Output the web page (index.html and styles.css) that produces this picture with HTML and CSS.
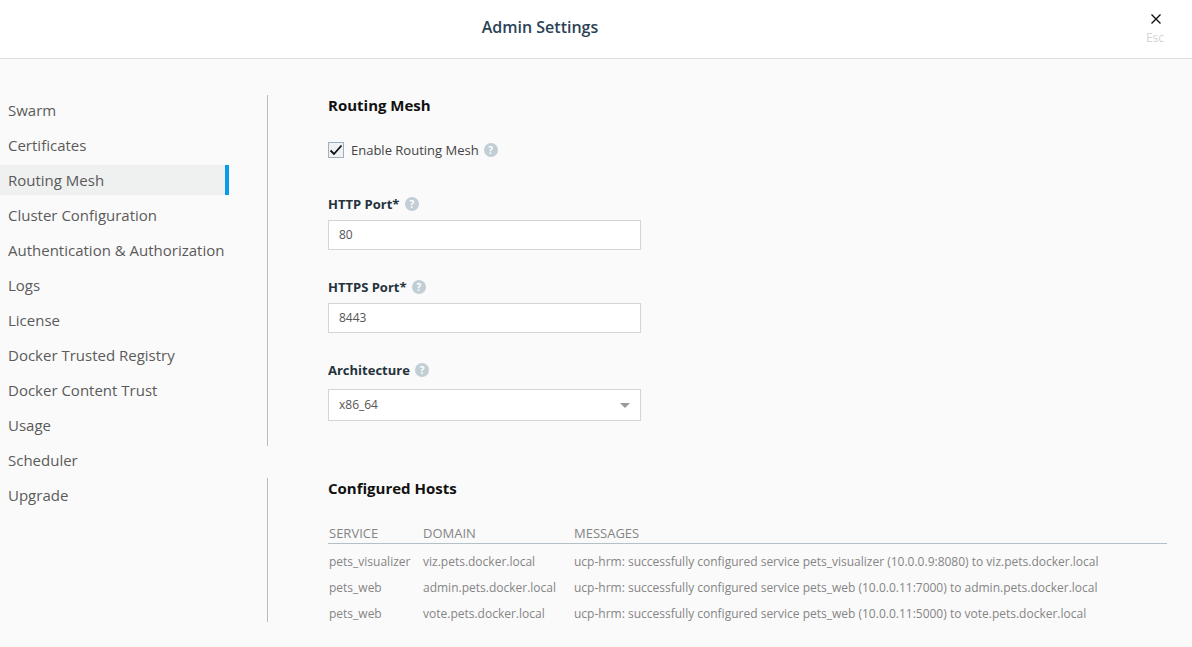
FILE: index.html
```html
<!doctype html>
<html>
<head>
<meta charset="utf-8">
<title>Admin Settings</title>
<link rel="stylesheet" href="styles.css">
</head>
<body>
<div class="header">
	<h1>Admin Settings</h1>
	<a class="close" href="#">
		<svg width="10" height="10" viewBox="0 0 10 10"><path d="M0.5 0.5L9.5 9.5M9.5 0.5L0.5 9.5" stroke="#111" stroke-width="1.4" fill="none"/></svg>
		<span>Esc</span>
	</a>
</div>
<div class="content">
	<ul class="nav">
		<li><a href="#">Swarm</a></li>
		<li><a href="#">Certificates</a></li>
		<li class="active"><a href="#">Routing Mesh</a></li>
		<li><a href="#">Cluster Configuration</a></li>
		<li><a href="#">Authentication &amp; Authorization</a></li>
		<li><a href="#">Logs</a></li>
		<li><a href="#">License</a></li>
		<li><a href="#">Docker Trusted Registry</a></li>
		<li><a href="#">Docker Content Trust</a></li>
		<li><a href="#">Usage</a></li>
		<li><a href="#">Scheduler</a></li>
		<li><a href="#">Upgrade</a></li>
	</ul>
	<div class="main">
		<div class="section mesh">
			<h2>Routing Mesh</h2>
			<label class="check">
				<i class="box"><svg width="14" height="12" viewBox="0 0 14 12"><path d="M1.5 6.5L5 10L12.5 1.5" stroke="#111" stroke-width="1.8" fill="none"/></svg></i>
				Enable Routing Mesh <b class="help">?</b>
			</label>
			<div class="field">
				<label>HTTP Port* <b class="help">?</b></label>
				<div class="input">80</div>
			</div>
			<div class="field">
				<label>HTTPS Port* <b class="help">?</b></label>
				<div class="input">8443</div>
			</div>
			<div class="field">
				<label>Architecture <b class="help">?</b></label>
				<div class="input select">x86_64<i class="arrow"></i></div>
			</div>
		</div>
		<div class="section hosts">
			<h2>Configured Hosts</h2>
			<table>
				<tr><th>SERVICE</th><th>DOMAIN</th><th>MESSAGES</th></tr>
				<tr><td>pets_visualizer</td><td>viz.pets.docker.local</td><td>ucp-hrm: successfully configured service pets_visualizer (10.0.0.9:8080) to viz.pets.docker.local</td></tr>
				<tr><td>pets_web</td><td>admin.pets.docker.local</td><td>ucp-hrm: successfully configured service pets_web (10.0.0.11:7000) to admin.pets.docker.local</td></tr>
				<tr><td>pets_web</td><td>vote.pets.docker.local</td><td>ucp-hrm: successfully configured service pets_web (10.0.0.11:5000) to vote.pets.docker.local</td></tr>
			</table>
		</div>
	</div>
</div>
</body>
</html>
```

FILE: styles.css
```css
* {padding:0;margin:0;box-sizing:border-box;}
html,body {height:100%;}
body {
	background:#fafafa;
	font-family:"Open Sans","Liberation Sans",sans-serif;
	color:#555;
	overflow:hidden;
}
a {color:inherit;text-decoration:none;}

.header {
	height:59px;
	background:#fff;
	border-bottom:1px solid #e0e0e0;
	padding-right:112px;
	display:flex;
	justify-content:center;
	align-items:center;
	position:relative;
}
.header h1 {
	font-size:16px;
	font-weight:600;
	color:#2c4257;
	margin-top:-5px;
}
.close {
	position:absolute;
	top:14px;
	right:26px;
	width:20px;
	display:flex;
	flex-direction:column;
	align-items:center;
	line-height:14px;
}
.close span {
	font-size:12px;
	color:#d4d4d4;
	margin-top:7px;
	margin-right:2px;
}

.content {
	display:flex;
	align-items:flex-start;
}
.nav {
	list-style:none;
	width:229px;
	margin:36px 38px 0 0;
	flex-shrink:0;
}
.nav li {
	height:30px;
	margin-bottom:5px;
	line-height:30px;
	font-size:15px;
	padding-left:8px;
	color:#5a5a5a;
	white-space:nowrap;
}
.nav li.active {
	background:#eff0f0;
	border-right:4px solid #0a9cec;
}

.main {
	flex:1;
	margin-right:25px;
	padding-top:36px;
}
.section {
	border-left:1px solid #b4c0c8;
	padding-left:60px;
}
.section h2 {
	font-size:15px;
	font-weight:700;
	line-height:20px;
	color:#111;
}
.mesh {
	height:351px;
}
.hosts {
	height:144px;
	margin-top:32px;
}

.check {
	display:flex;
	align-items:center;
	margin-top:26px;
	height:18px;
	font-size:13px;
	color:#444;
}
.box {
	width:16px;
	height:16px;
	border:1px solid #9fb0bd;
	background:#eef2f5;
	margin-right:7px;
	display:flex;
	align-items:center;
	justify-content:center;
}
.help {
	display:inline-block;
	width:14px;
	height:14px;
	border-radius:50%;
	background:#c2ced5;
	color:#fff;
	font-size:10px;
	font-weight:700;
	line-height:14px;
	text-align:center;
	margin-left:2px;
}
.check .help {
	margin-left:5px;
}

.field {
	width:313px;
	margin-top:28px;
}
.field:nth-of-type(1) {
	margin-top:36px;
}
.field label {
	display:flex;
	align-items:center;
	height:18px;
	font-size:13px;
	font-weight:700;
	color:#25323c;
	white-space:pre;
}
.input {
	height:30px;
	margin-top:7px;
	background:#fff;
	border:1px solid #d2d6d8;
	padding-left:10px;
	font-size:12px;
	line-height:28px;
	color:#555;
	position:relative;
}
.select {
	height:32px;
	margin-top:10px;
	line-height:30px;
}
.arrow {
	position:absolute;
	right:10px;
	top:13px;
	border-left:5.5px solid transparent;
	border-right:5.5px solid transparent;
	border-top:5px solid #999;
}

table {
	width:100%;
	margin-top:21px;
	border-collapse:collapse;
	font-size:12px;
	color:#858585;
	text-align:left;
}
th {
	font-weight:400;
	font-size:13px;
	line-height:20px;
	height:24px;
	padding:4px 0 0 1px;
	vertical-align:top;
	border-bottom:1px solid #b4c0c8;
	white-space:nowrap;
}
td {
	height:26px;
	padding-left:1px;
	white-space:nowrap;
}
tr:nth-child(2) td {
	height:31px;
	padding-top:5px;
}
th:nth-child(1) {width:94px;}
th:nth-child(2) {width:151px;}
```
